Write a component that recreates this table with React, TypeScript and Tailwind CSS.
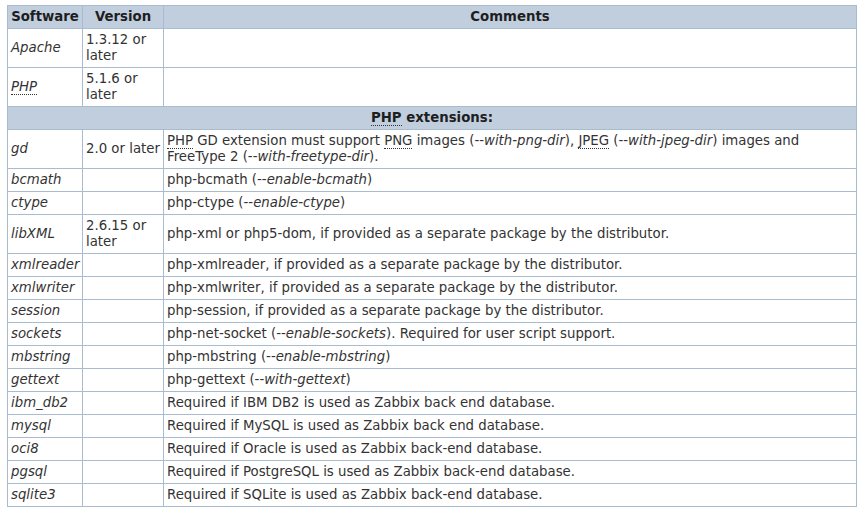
import React from "react";

const Abbr = ({ children }: { children: React.ReactNode }) => (
  <span className="border-b border-dotted border-[#333]">{children}</span>
);

type Row = { name: string; ver?: React.ReactNode; comment?: React.ReactNode; abbrName?: boolean };

const I = ({ children }: { children: React.ReactNode }) => <i>{children}</i>;

const topRows: Row[] = [
  { name: "Apache", ver: <>1.3.12 or<br />later</> },
  { name: "PHP", ver: <>5.1.6 or<br />later</>, abbrName: true },
];

const extRows: Row[] = [
  {
    name: "gd",
    ver: <span className="whitespace-nowrap">2.0 or later</span>,
    comment: (
      <>
        <Abbr>PHP</Abbr> GD extension must support <Abbr>PNG</Abbr> images (--<I>with-png-dir</I>), <Abbr>JPEG</Abbr> (--<I>with-jpeg-dir</I>) images and
        <br />
        FreeType 2 (--<I>with-freetype-dir</I>).
      </>
    ),
  },
  { name: "bcmath", comment: <>php-bcmath (--<I>enable-bcmath</I>)</> },
  { name: "ctype", comment: <>php-ctype (--<I>enable-ctype</I>)</> },
  { name: "libXML", ver: <>2.6.15 or<br />later</>, comment: "php-xml or php5-dom, if provided as a separate package by the distributor." },
  { name: "xmlreader", comment: "php-xmlreader, if provided as a separate package by the distributor." },
  { name: "xmlwriter", comment: "php-xmlwriter, if provided as a separate package by the distributor." },
  { name: "session", comment: "php-session, if provided as a separate package by the distributor." },
  { name: "sockets", comment: <>php-net-socket (--<I>enable-sockets</I>). Required for user script support.</> },
  { name: "mbstring", comment: <>php-mbstring (--<I>enable-mbstring</I>)</> },
  { name: "gettext", comment: <>php-gettext (--<I>with-gettext</I>)</> },
  { name: "ibm_db2", comment: "Required if IBM DB2 is used as Zabbix back end database." },
  { name: "mysql", comment: "Required if MySQL is used as Zabbix back end database." },
  { name: "oci8", comment: "Required if Oracle is used as Zabbix back-end database." },
  { name: "pgsql", comment: "Required if PostgreSQL is used as Zabbix back-end database." },
  { name: "sqlite3", comment: "Required if SQLite is used as Zabbix back-end database." },
];

const td = "border border-[#a9bccf] px-[3px] py-[3px] align-middle text-left overflow-hidden";
const th = "border border-[#a9bccf] px-[3px] py-[3px] bg-[#c1cede] font-bold text-center text-[#1e1e1e]";

function BodyRow({ r }: { r: Row }) {
  return (
    <tr>
      <td className={td + " italic"}>{r.abbrName ? <Abbr>{r.name}</Abbr> : r.name}</td>
      <td className={td}>{r.ver}</td>
      <td className={td}>{r.comment}</td>
    </tr>
  );
}

export default function App() {
  return (
    <div className="w-[867px] h-[515px] bg-white pt-[5px] pl-[7px]" style={{ fontFamily: '"DejaVu Sans", Verdana, sans-serif' }}>
      <table className="border-collapse w-[850px] text-[13.3px] leading-[16px] text-[#333] table-fixed">
        <colgroup>
          <col className="w-[75px]" />
          <col className="w-[81px]" />
          <col />
        </colgroup>
        <thead>
          <tr>
            <th className={th}>Software</th>
            <th className={th}>Version</th>
            <th className={th}>Comments</th>
          </tr>
        </thead>
        <tbody>
          {topRows.map((r) => (
            <BodyRow key={r.name} r={r} />
          ))}
          <tr>
            <td colSpan={3} className={th}>
              <Abbr>PHP</Abbr> extensions:
            </td>
          </tr>
          {extRows.map((r) => (
            <BodyRow key={r.name} r={r} />
          ))}
        </tbody>
      </table>
    </div>
  );
}
